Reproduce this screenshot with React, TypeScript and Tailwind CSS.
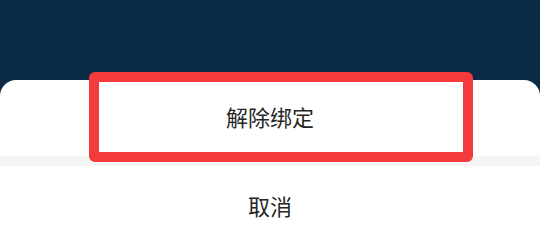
import React from "react";

export default function App() {
  return (
    <div
      className="relative w-[540px] h-[243px] overflow-hidden bg-[#0b2a45]"
      style={{ fontFamily: '"Noto Sans CJK SC", "Noto Sans", sans-serif' }}
    >
      <div className="mt-[80px] bg-white rounded-t-[16px] flex flex-col">
        <div className="h-[76px] pb-[4px] flex items-center justify-center text-[22px] text-[#262626]">
          解除绑定
        </div>
        <div className="h-[10px] bg-[#f5f5f5]" />
        <div className="h-[82px] pb-[4px] flex items-center justify-center text-[22px] text-[#262626]">
          取消
        </div>
      </div>
      <div className="absolute left-[89px] top-[72px] w-[384px] h-[90px] border-[10px] border-[#f43a3b] rounded-[6px]" />
    </div>
  );
}
